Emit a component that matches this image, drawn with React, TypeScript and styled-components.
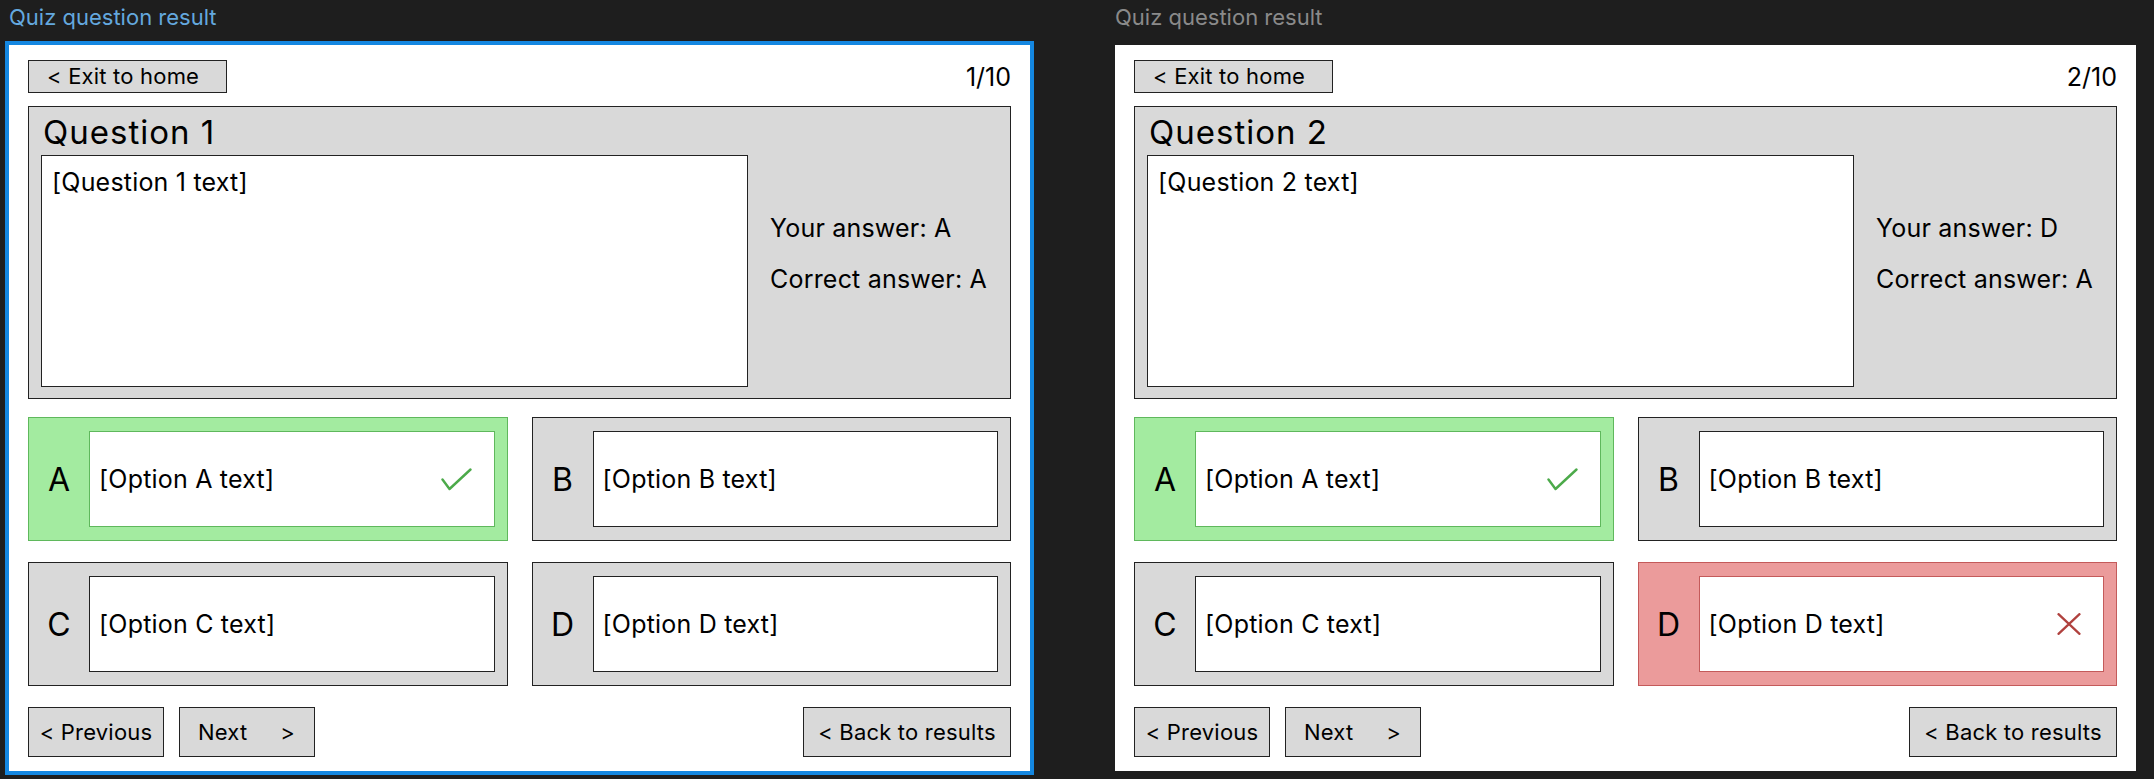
import React from "react";
import styled, { createGlobalStyle, css } from "styled-components";

const GlobalStyle = createGlobalStyle`
  * { box-sizing: border-box; }
  html, body { margin: 0; padding: 0; }
  body {
    background: #1e1e1e;
    font-family: Inter, "Noto Sans", "Liberation Sans", sans-serif;
    color: #000;
  }
`;

type OptionState = "neutral" | "correct" | "wrong";

const palette = {
  neutral: { bg: "#d9d9d9", border: "#222222", inner: "#222222" },
  correct: { bg: "#a3eba0", border: "#5fb85c", inner: "#5fb85c" },
  wrong: { bg: "#eb9b9b", border: "#c45a5a", inner: "#c45a5a" },
};

const Page = styled.div`
  display: flex;
  gap: 85px;
  padding: 4px 0 0 9px;
  min-height: 779px;
`;

const FrameColumn = styled.section`
  display: flex;
  flex-direction: column;
  gap: 14px;
`;

const FrameLabel = styled.div<{ $selected?: boolean }>`
  font-size: 22px;
  line-height: 27px;
  color: ${(p) => (p.$selected ? "#64a8de" : "#8a8a8a")};
`;

const Frame = styled.div<{ $selected?: boolean }>`
  width: 1021px;
  background: #ffffff;
  padding: 15px 19px 14px;
  display: flex;
  flex-direction: column;
  ${(p) =>
    p.$selected &&
    css`
      outline: 4px solid #1487e1;
    `}
`;

const Header = styled.div`
  display: flex;
  align-items: center;
  justify-content: space-between;
  height: 33px;
`;

const Counter = styled.span`
  font-size: 25px;
  line-height: 29px;
  padding-top: 2px;
`;

const GrayButton = styled.button<{ $width: number; $justify?: string; $pad?: string; $height?: number }>`
  width: ${(p) => p.$width}px;
  height: ${(p) => p.$height ?? 50}px;
  display: flex;
  align-items: center;
  justify-content: ${(p) => p.$justify ?? "center"};
  padding: ${(p) => p.$pad ?? "0"};
  background: #d9d9d9;
  border: 1px solid #222222;
  border-radius: 0;
  font-family: inherit;
  font-size: 22px;
  line-height: 27px;
  letter-spacing: 0.2px;
  color: #000;
  cursor: pointer;
  white-space: nowrap;
`;

const QuestionBox = styled.div`
  margin-top: 13px;
  display: flex;
  align-items: center;
  background: #d9d9d9;
  border: 1px solid #222222;
  padding: 6px 12px 11px 12px;
`;

const QuestionMain = styled.div`
  display: flex;
  flex-direction: column;
`;

const QuestionTitle = styled.h2`
  margin: 0 0 3px 0;
  padding-left: 2px;
  font-size: 33px;
  line-height: 39px;
  letter-spacing: 1px;
  font-weight: 400;
`;

const BodyText = css`
  font-size: 25px;
  line-height: 29px;
  letter-spacing: 0.2px;
`;

const QuestionText = styled.div`
  width: 707px;
  height: 232px;
  background: #ffffff;
  border: 1px solid #222222;
  padding: 12px 10px;
  ${BodyText}
`;

const AnswerInfo = styled.div`
  display: flex;
  flex-direction: column;
  gap: 22px;
  margin-left: 22px;
  padding-top: 7px;
  white-space: nowrap;
  ${BodyText}
`;

const OptionsGrid = styled.div`
  margin-top: 18px;
  display: grid;
  grid-template-columns: 1fr 1fr;
  column-gap: 24px;
  row-gap: 21px;
`;

const OptionCard = styled.div<{ $state: OptionState }>`
  height: 124px;
  display: flex;
  padding: 13px 12px 13px 0;
  background: ${(p) => palette[p.$state].bg};
  border: 1px solid ${(p) => palette[p.$state].border};
`;

const OptionLetter = styled.div`
  width: 60px;
  flex: none;
  display: flex;
  align-items: center;
  justify-content: center;
  font-size: 32px;
  line-height: 39px;
`;

const OptionBody = styled.div<{ $state: OptionState }>`
  flex: 1;
  display: flex;
  align-items: center;
  justify-content: space-between;
  padding: 0 22px 0 9px;
  background: #ffffff;
  border: 1px solid ${(p) => palette[p.$state].inner};
  ${BodyText}
`;

const Footer = styled.div`
  margin-top: 21px;
  display: flex;
  justify-content: space-between;
`;

const NavGroup = styled.div`
  display: flex;
  gap: 15px;
`;

const CheckIcon = () => (
  <svg width="31" height="23" viewBox="0 0 31 23" fill="none">
    <polyline
      points="1.5,11.5 8.5,21 29.5,1.5"
      stroke="#4caa4a"
      strokeWidth="2.4"
      strokeLinecap="round"
      strokeLinejoin="round"
    />
  </svg>
);

const CrossIcon = () => (
  <svg width="24" height="22" viewBox="0 0 24 22" fill="none">
    <path
      d="M1.5 1.2 L22.5 20.8 M22.5 1.2 L1.5 20.8"
      stroke="#b0413e"
      strokeWidth="2.3"
      strokeLinecap="round"
    />
  </svg>
);

type Option = { letter: string; state: OptionState };

type QuizData = {
  index: number;
  selected?: boolean;
  yourAnswer: string;
  correctAnswer: string;
  options: Option[];
};

const quizzes: QuizData[] = [
  {
    index: 1,
    selected: true,
    yourAnswer: "A",
    correctAnswer: "A",
    options: [
      { letter: "A", state: "correct" },
      { letter: "B", state: "neutral" },
      { letter: "C", state: "neutral" },
      { letter: "D", state: "neutral" },
    ],
  },
  {
    index: 2,
    yourAnswer: "D",
    correctAnswer: "A",
    options: [
      { letter: "A", state: "correct" },
      { letter: "B", state: "neutral" },
      { letter: "C", state: "neutral" },
      { letter: "D", state: "wrong" },
    ],
  },
];

const QuizFrame = ({ q }: { q: QuizData }) => (
  <FrameColumn>
    <FrameLabel $selected={q.selected}>Quiz question result</FrameLabel>
    <Frame $selected={q.selected}>
      <Header>
        <GrayButton $width={199} $height={33} $justify="flex-start" $pad="0 0 0 18px">
          &lt; Exit to home
        </GrayButton>
        <Counter>{q.index}/10</Counter>
      </Header>
      <QuestionBox>
        <QuestionMain>
          <QuestionTitle>Question {q.index}</QuestionTitle>
          <QuestionText>[Question {q.index} text]</QuestionText>
        </QuestionMain>
        <AnswerInfo>
          <span>Your answer: {q.yourAnswer}</span>
          <span>Correct answer: {q.correctAnswer}</span>
        </AnswerInfo>
      </QuestionBox>
      <OptionsGrid>
        {q.options.map((o) => (
          <OptionCard key={o.letter} $state={o.state}>
            <OptionLetter>{o.letter}</OptionLetter>
            <OptionBody $state={o.state}>
              <span>[Option {o.letter} text]</span>
              {o.state === "correct" && <CheckIcon />}
              {o.state === "wrong" && <CrossIcon />}
            </OptionBody>
          </OptionCard>
        ))}
      </OptionsGrid>
      <Footer>
        <NavGroup>
          <GrayButton $width={136}>&lt; Previous</GrayButton>
          <GrayButton $width={136} $justify="space-between" $pad="0 19px 0 18px">
            <span>Next</span>
            <span>&gt;</span>
          </GrayButton>
        </NavGroup>
        <GrayButton $width={208}>&lt; Back to results</GrayButton>
      </Footer>
    </Frame>
  </FrameColumn>
);

export default function App() {
  return (
    <>
      <GlobalStyle />
      <Page>
        {quizzes.map((q) => (
          <QuizFrame key={q.index} q={q} />
        ))}
      </Page>
    </>
  );
}
